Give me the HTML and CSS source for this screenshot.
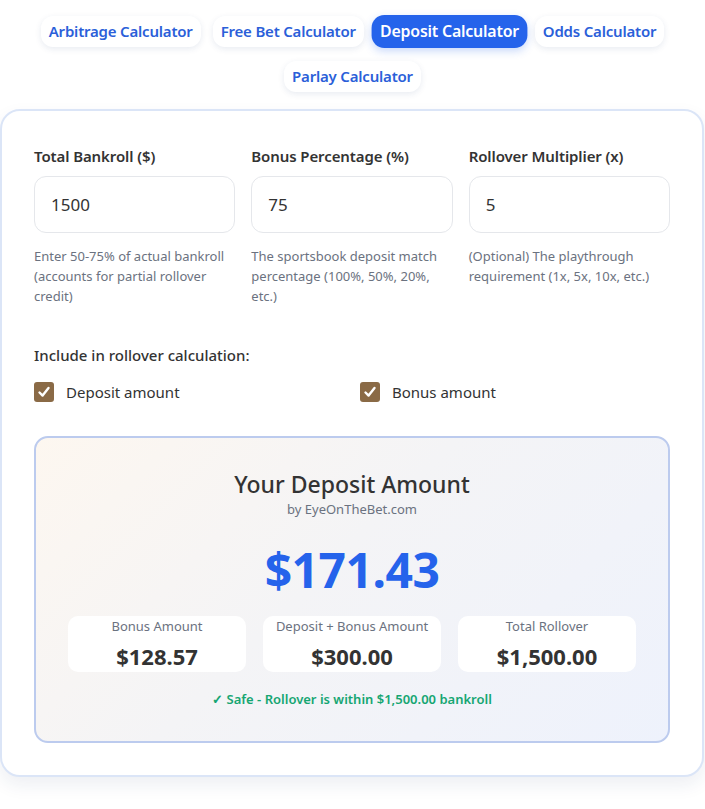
FILE: index.html
```html
<!DOCTYPE html>
<html>
<head>
<meta charset="utf-8">
<link rel="stylesheet" href="styles.css">
</head>
<body>
<nav class="tabs">
  <button class="tab">Arbitrage Calculator</button>
  <button class="tab">Free Bet Calculator</button>
  <button class="tab active">Deposit Calculator</button>
  <button class="tab">Odds Calculator</button>
  <button class="tab">Parlay Calculator</button>
</nav>
<main class="card">
  <div class="fields">
    <div class="field">
      <label class="label">Total Bankroll ($)</label>
      <div class="input">1500</div>
      <p class="help">Enter 50-75% of actual bankroll (accounts for partial rollover credit)</p>
    </div>
    <div class="field">
      <label class="label">Bonus Percentage (%)</label>
      <div class="input">75</div>
      <p class="help">The sportsbook deposit match percentage (100%, 50%, 20%, etc.)</p>
    </div>
    <div class="field">
      <label class="label">Rollover Multiplier (x)</label>
      <div class="input">5</div>
      <p class="help">(Optional) The playthrough requirement (1x, 5x, 10x, etc.)</p>
    </div>
  </div>
  <div class="include">
    <div class="include-title">Include in rollover calculation:</div>
    <div class="checks">
      <div class="check"><span class="box"><svg width="14" height="14" viewBox="0 0 14 14"><path d="M2.5 7.5 L5.6 10.6 L11.5 3" fill="none" stroke="#fff" stroke-width="2.4" stroke-linecap="round" stroke-linejoin="round"/></svg></span>Deposit amount</div>
      <div class="check"><span class="box"><svg width="14" height="14" viewBox="0 0 14 14"><path d="M2.5 7.5 L5.6 10.6 L11.5 3" fill="none" stroke="#fff" stroke-width="2.4" stroke-linecap="round" stroke-linejoin="round"/></svg></span>Bonus amount</div>
    </div>
  </div>
  <section class="result">
    <h2 class="result-title">Your Deposit Amount</h2>
    <div class="byline">by EyeOnTheBet.com</div>
    <div class="amount">$171.43</div>
    <div class="stats">
      <div class="stat"><div class="stat-label">Bonus Amount</div><div class="stat-value">$128.57</div></div>
      <div class="stat"><div class="stat-label">Deposit + Bonus Amount</div><div class="stat-value">$300.00</div></div>
      <div class="stat"><div class="stat-label">Total Rollover</div><div class="stat-value">$1,500.00</div></div>
    </div>
    <div class="safe">✓ Safe - Rollover is within $1,500.00 bankroll</div>
  </section>
</main>
</body>
</html>
```
FILE: styles.css
```css
* { box-sizing: border-box; }
html, body { margin: 0; padding: 0; background: #fff; }
body {
  font-family: "Noto Sans", "Open Sans", sans-serif;
  color: #333;
  width: 705px;
  height: 809px;
  overflow: hidden;
}
.tabs {
  display: flex;
  flex-wrap: wrap;
  justify-content: center;
  gap: 14px 12px;
  padding: 16px 30px 0;
}
.tab {
  font-family: inherit;
  font-size: 15px;
  font-weight: 600;
  line-height: 21px;
  color: #2b5fd9;
  background: #fff;
  border: none;
  border-radius: 12px;
  padding: 5px 8px;
  box-shadow: 0 2px 6px rgba(30, 60, 120, 0.10);
  letter-spacing: -0.2px;
}
.tab.active {
  background: #2563eb;
  color: #fff;
  transform: scale(1.06);
  box-shadow: 0 3px 8px rgba(37, 99, 235, 0.25);
}
.card {
  margin: 17px 1px 0 0;
  border: 2px solid #dbe5f7;
  border-radius: 20px;
  background: #fff;
  padding: 35px 32px 32px;
  box-shadow: 0 8px 18px rgba(30, 50, 100, 0.08);
}
.fields {
  display: grid;
  grid-template-columns: repeat(3, 1fr);
  gap: 16px;
}
.field { display: flex; flex-direction: column; }
.label {
  font-size: 15px;
  font-weight: 600;
  color: #333;
  line-height: 20px;
  margin-bottom: 10px;
  letter-spacing: -0.1px;
}
.input {
  height: 57px;
  border: 1px solid #e5e7eb;
  border-radius: 12px;
  padding: 0 16px;
  display: flex;
  align-items: center;
  font-size: 17px;
  color: #333;
  background: #fff;
}
.help {
  margin: 13px 0 0;
  font-size: 13px;
  line-height: 20px;
  color: #6b7280;
}
.include { margin-top: 39px; }
.include-title {
  font-size: 15px;
  font-weight: 500;
  line-height: 20px;
  color: #333;
}
.checks {
  display: grid;
  grid-template-columns: 1fr 1fr;
  gap: 16px;
  margin-top: 17px;
}
.check {
  display: flex;
  align-items: center;
  font-size: 15px;
  color: #333;
  line-height: 20px;
}
.box {
  width: 20px;
  height: 20px;
  border-radius: 3px;
  background: #8a6a46;
  display: inline-flex;
  align-items: center;
  justify-content: center;
  margin-right: 12px;
}
.result {
  margin-top: 34px;
  border: 2px solid #bccbee;
  border-radius: 14px;
  background: linear-gradient(135deg, #fdf7f0 0%, #f4f4f6 45%, #eef2fc 100%);
  padding: 31px 32px 33px;
  text-align: center;
}
.result-title {
  margin: 0;
  font-size: 23px;
  font-weight: 500;
  line-height: 31px;
  color: #333;
}
.byline {
  font-size: 13px;
  color: #6b7280;
  line-height: 18px;
}
.amount {
  margin-top: 22px;
  font-size: 48px;
  font-weight: 700;
  line-height: 60px;
  color: #2563eb;
  letter-spacing: -0.5px;
}
.stats {
  display: grid;
  grid-template-columns: repeat(3, 1fr);
  gap: 17px;
  margin-top: 16px;
}
.stat {
  background: #fff;
  border-radius: 10px;
  height: 56px;
  padding-top: 1px;
}
.stat-label {
  font-size: 13px;
  color: #6b7280;
  line-height: 18px;
}
.stat-value {
  font-size: 22px;
  font-weight: 700;
  color: #333;
  line-height: 30px;
  margin-top: 6px;
}
.safe {
  margin-top: 18px;
  font-size: 13px;
  font-weight: 600;
  color: #16a672;
  line-height: 18px;
}
```
